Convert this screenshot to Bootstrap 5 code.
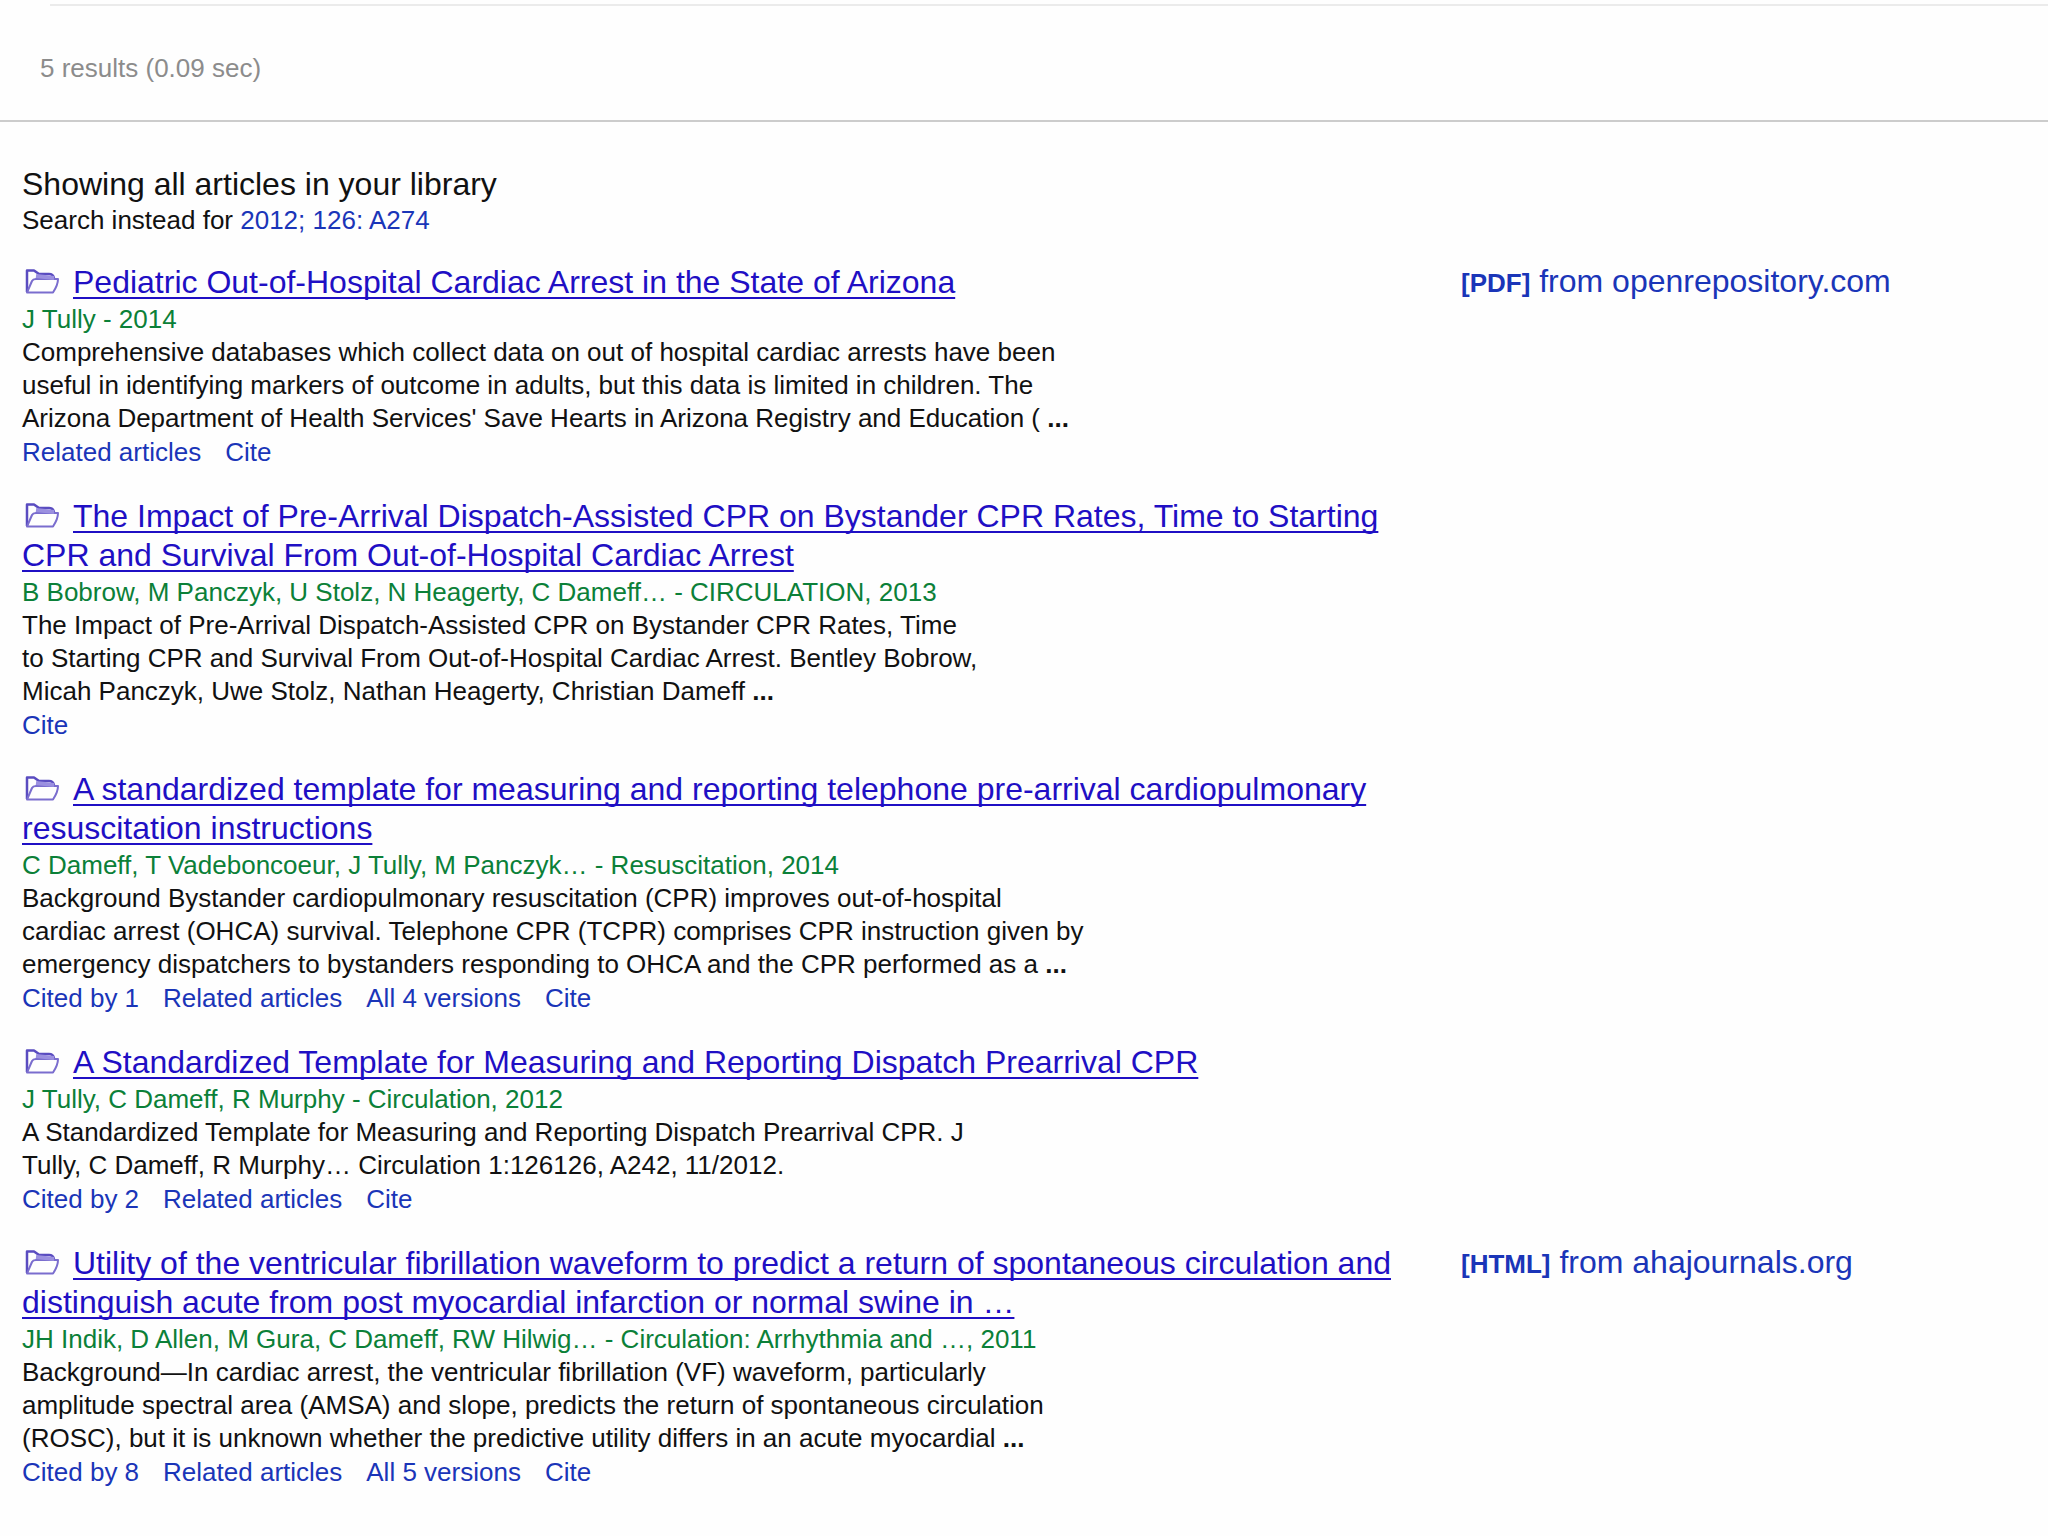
<!DOCTYPE html>
<html lang="en">
<head>
<meta charset="utf-8">
<meta name="viewport" content="width=device-width, initial-scale=1">
<title>My library</title>
<link href="https://cdn.jsdelivr.net/npm/bootstrap@5.3.0/dist/css/bootstrap.min.css" rel="stylesheet">
<style>
body { font-family: "Liberation Sans", Arial, sans-serif; font-size: 26px; line-height: 33px; color: #111; background: #fefefe; }
a { color: #1a35b8; text-decoration: none; }
.top-rule { height: 6px; margin-left: 50px; border-bottom: 2px solid #ebebeb; }
.stats { padding: 46px 40px 35px; color: #8c8c8c; border-bottom: 2px solid #ccc; }
.library { padding: 43px 22px 24px; }
.heading { font-size: 32px; line-height: 39px; }
.results { display: grid; gap: 28px; margin-top: 26px; }
.result { display: grid; grid-template-columns: minmax(0, 1400px) minmax(0, 1fr); column-gap: 39px; }
.title { font-size: 32px; line-height: 39px; font-weight: 400; }
.title a { color: #1f0fc4; text-decoration: underline; text-decoration-thickness: 2px; text-underline-offset: 4px; text-decoration-skip-ink: none; }
.folder { width: 36px; height: 26px; margin: 0 14px 0 1px; vertical-align: -1px; }
.authors { color: #0b8038; margin-top: 1px; }
.actions { margin-top: 1px; column-gap: 24px; }
.source { font-size: 32px; line-height: 36px; }
.source b { font-size: 26px; }
</style>
<script src="https://cdn.jsdelivr.net/npm/bootstrap@5.3.0/dist/js/bootstrap.bundle.min.js"></script>
</head>
<body>
<svg class="d-none" aria-hidden="true">
  <symbol id="folder" viewBox="0 0 36 26">
    <path d="M4 24V2.500H11L16 6H26Q30 6 31 10" fill="none" stroke="#5a4cc0" stroke-width="2.500" stroke-linejoin="round"/>
    <path d="M4 24.500L9 13Q10 11 13 11H35Q35 17 30 24.500Z" fill="#fefefe" stroke="#7a6dce" stroke-width="2" stroke-linejoin="round"/>
    <path d="M13 8L31 10" fill="none" stroke="#9b90e0" stroke-width="4"/>
  </symbol>
</svg>
<header>
  <div class="top-rule"></div>
  <div class="stats">5 results (0.09 sec)</div>
</header>
<main class="library">
  <h1 class="heading fw-normal m-0">Showing all articles in your library</h1>
  <p class="m-0">Search instead for <a href="#">2012; 126: A274</a></p>
  <div class="results">
    <article class="result">
      <div>
        <h2 class="title m-0"><svg class="folder" aria-hidden="true"><use href="#folder"/></svg><a href="#">Pediatric Out-of-Hospital Cardiac Arrest in the State of Arizona</a></h2>
        <div class="authors">J Tully - 2014</div>
        <p class="m-0">Comprehensive databases which collect data on out of hospital cardiac arrests have been<br>useful in identifying markers of outcome in adults, but this data is limited in children. The<br>Arizona Department of Health Services' Save Hearts in Arizona Registry and Education ( <b>...</b></p>
        <div class="actions d-flex flex-wrap"><a href="#">Related articles</a><a href="#">Cite</a></div>
      </div>
      <div class="source"><a href="#"><b>[PDF]</b> from openrepository.com</a></div>
    </article>
    <article class="result">
      <div>
        <h2 class="title m-0"><svg class="folder" aria-hidden="true"><use href="#folder"/></svg><a href="#">The Impact of Pre-Arrival Dispatch-Assisted CPR on Bystander CPR Rates, Time to Starting CPR and Survival From Out-of-Hospital Cardiac Arrest</a></h2>
        <div class="authors">B Bobrow, M Panczyk, U Stolz, N Heagerty, C Dameff… - CIRCULATION, 2013</div>
        <p class="m-0">The Impact of Pre-Arrival Dispatch-Assisted CPR on Bystander CPR Rates, Time<br>to Starting CPR and Survival From Out-of-Hospital Cardiac Arrest. Bentley Bobrow,<br>Micah Panczyk, Uwe Stolz, Nathan Heagerty, Christian Dameff <b>...</b></p>
        <div class="actions d-flex flex-wrap"><a href="#">Cite</a></div>
      </div>
    </article>
    <article class="result">
      <div>
        <h2 class="title m-0"><svg class="folder" aria-hidden="true"><use href="#folder"/></svg><a href="#">A standardized template for measuring and reporting telephone pre-arrival cardiopulmonary resuscitation instructions</a></h2>
        <div class="authors">C Dameff, T Vadeboncoeur, J Tully, M Panczyk… - Resuscitation, 2014</div>
        <p class="m-0">Background Bystander cardiopulmonary resuscitation (CPR) improves out-of-hospital<br>cardiac arrest (OHCA) survival. Telephone CPR (TCPR) comprises CPR instruction given by<br>emergency dispatchers to bystanders responding to OHCA and the CPR performed as a <b>...</b></p>
        <div class="actions d-flex flex-wrap"><a href="#">Cited by 1</a><a href="#">Related articles</a><a href="#">All 4 versions</a><a href="#">Cite</a></div>
      </div>
    </article>
    <article class="result">
      <div>
        <h2 class="title m-0"><svg class="folder" aria-hidden="true"><use href="#folder"/></svg><a href="#">A Standardized Template for Measuring and Reporting Dispatch Prearrival CPR</a></h2>
        <div class="authors">J Tully, C Dameff, R Murphy - Circulation, 2012</div>
        <p class="m-0">A Standardized Template for Measuring and Reporting Dispatch Prearrival CPR. J<br>Tully, C Dameff, R Murphy… Circulation 1:126126, A242, 11/2012.</p>
        <div class="actions d-flex flex-wrap"><a href="#">Cited by 2</a><a href="#">Related articles</a><a href="#">Cite</a></div>
      </div>
    </article>
    <article class="result">
      <div>
        <h2 class="title m-0"><svg class="folder" aria-hidden="true"><use href="#folder"/></svg><a href="#">Utility of the ventricular fibrillation waveform to predict a return of spontaneous circulation and distinguish acute from post myocardial infarction or normal swine in …</a></h2>
        <div class="authors">JH Indik, D Allen, M Gura, C Dameff, RW Hilwig… - Circulation: Arrhythmia and …, 2011</div>
        <p class="m-0">Background—In cardiac arrest, the ventricular fibrillation (VF) waveform, particularly<br>amplitude spectral area (AMSA) and slope, predicts the return of spontaneous circulation<br>(ROSC), but it is unknown whether the predictive utility differs in an acute myocardial <b>...</b></p>
        <div class="actions d-flex flex-wrap"><a href="#">Cited by 8</a><a href="#">Related articles</a><a href="#">All 5 versions</a><a href="#">Cite</a></div>
      </div>
      <div class="source"><a href="#"><b>[HTML]</b> from ahajournals.org</a></div>
    </article>
  </div>
</main>
</body>
</html>
